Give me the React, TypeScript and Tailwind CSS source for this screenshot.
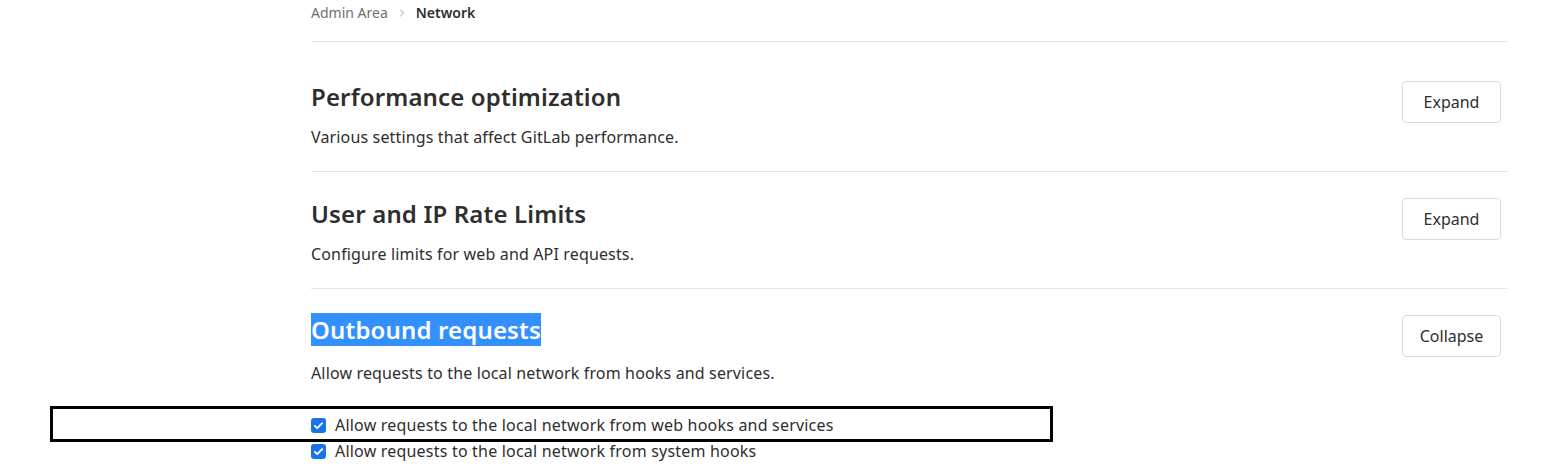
import { ChevronRight } from "lucide-react";

function Check({ label }: { label: string }) {
  return (
    <label className="flex items-center gap-[9px] h-[26px] text-[16px] tracking-[0.2px] text-[#2e2e2e]">
      <span className="w-[15px] h-[15px] rounded-[3px] bg-[#1a73e8] flex items-center justify-center">
        <svg width="11" height="11" viewBox="0 0 12 12" fill="none">
          <path d="M2 6.3l2.6 2.6L10 3.4" stroke="white" strokeWidth="2" strokeLinecap="round" strokeLinejoin="round" />
        </svg>
      </span>
      {label}
    </label>
  );
}

function Section({
  title,
  desc,
  button,
  first,
}: {
  title: string;
  desc: string;
  button: string;
  first?: boolean;
}) {
  return (
    <section className={"border-b border-[#e5e5e5] pb-[24px] " + (first ? "pt-[38px]" : "pt-[25px]")}>
      <div className="flex justify-between items-start">
        <div>
          {/* titulo */}
          <h2 className="text-[24px] leading-[34px] font-semibold tracking-[0.15px] text-[#2e2e2e]">{title}</h2>
          <p className="mt-[13px] text-[16px] leading-[20px] tracking-[0.15px] text-[#2e2e2e]">{desc}</p>
        </div>
        <button className="mr-[7px] mt-[1px] w-[99px] h-[42px] border border-[#dbdbdb] rounded-[4px] bg-white text-[16px] text-[#2e2e2e]">
          {button}
        </button>
      </div>
    </section>
  );
}

export default function App() {
  return (
    <div className="relative w-[1565px] h-[475px] bg-white overflow-hidden font-['Segoe_UI','Noto_Sans',sans-serif]">
      <div className="ml-[311px] w-[1197px]">
        {/* breadcrumb */}
        <div className="h-[42px] border-b border-[#e5e5e5] flex items-start pt-[4px] text-[14px] leading-[18px]">
          <span className="text-[#707070]">Admin Area</span>
          <ChevronRight className="w-[12px] h-[12px] mx-[8px] mt-[3px] text-[#999]" />
          <span className="font-semibold text-[#2e2e2e]">Network</span>
        </div>

        <Section
          first
          title="Performance optimization"
          desc="Various settings that affect GitLab performance."
          button="Expand"
        />
        <Section
          title="User and IP Rate Limits"
          desc="Configure limits for web and API requests."
          button="Expand"
        />

        {/* outbound */}
        <section className="pt-[24px]">
          <div className="flex justify-between items-start">
            <div>
              <h2 className="text-[24px] leading-[34px] font-semibold tracking-[0.15px] text-[#2e2e2e]">
                <span className="bg-[#3390ff] text-white">Outbound requests</span>
              </h2>
              <p className="mt-[16px] text-[16px] leading-[20px] tracking-[0.15px] text-[#2e2e2e]">
                Allow requests to the local network from hooks and services.
              </p>
            </div>
            <button className="mr-[7px] mt-[2px] w-[99px] h-[42px] border border-[#dbdbdb] rounded-[4px] bg-white text-[16px] text-[#2e2e2e]">
              Collapse
            </button>
          </div>
          <div className="mt-[29px] flex flex-col">
            <Check label="Allow requests to the local network from web hooks and services" />
            <Check label="Allow requests to the local network from system hooks" />
          </div>
        </section>
      </div>

      {/* marcação */}
      <div className="absolute left-[50px] top-[406px] w-[1003px] h-[36px] border-[3px] border-black pointer-events-none" />
    </div>
  );
}
